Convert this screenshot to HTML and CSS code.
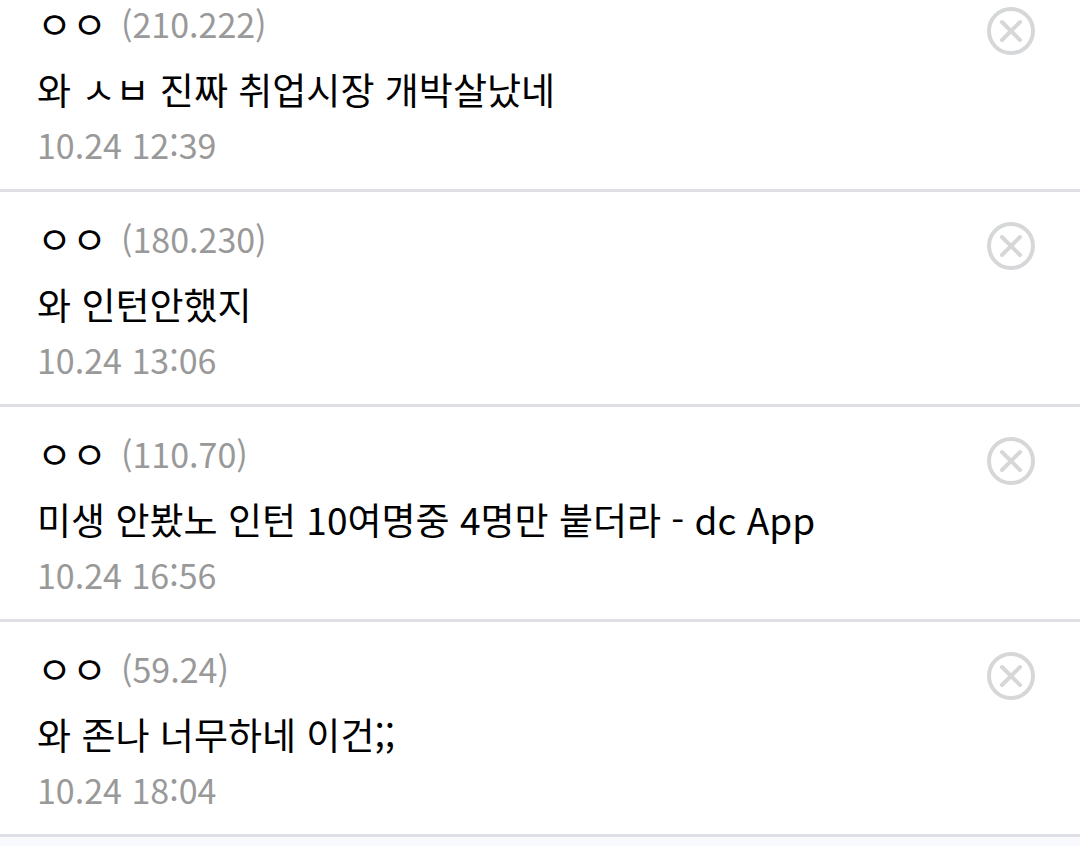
FILE: index.html
```html
<!DOCTYPE html>
<html lang="ko">
	<head>
		<meta charset="utf-8">
		<meta name="viewport" content="width=device-width">
		<title>댓글</title>
		<link rel="stylesheet" href="styles.css">
	</head>
	<body>
		<ul class="comments">
			<li class="comment">
				<div class="body">
					<p class="writer"><span class="nick">ㅇㅇ</span><span class="ip">(210.222)</span></p>
					<p class="text">와 ㅅㅂ 진짜 취업시장 개박살났네</p>
					<time class="date">10.24 12:39</time>
				</div>
				<button class="delete" type="button" aria-label="삭제">
					<svg viewBox="0 0 48 48"><circle cx="24" cy="24" r="22"/><path d="M15 15L33 33M33 15L15 33"/></svg>
				</button>
			</li>
			<li class="comment">
				<div class="body">
					<p class="writer"><span class="nick">ㅇㅇ</span><span class="ip">(180.230)</span></p>
					<p class="text">와 인턴안했지</p>
					<time class="date">10.24 13:06</time>
				</div>
				<button class="delete" type="button" aria-label="삭제">
					<svg viewBox="0 0 48 48"><circle cx="24" cy="24" r="22"/><path d="M15 15L33 33M33 15L15 33"/></svg>
				</button>
			</li>
			<li class="comment">
				<div class="body">
					<p class="writer"><span class="nick">ㅇㅇ</span><span class="ip">(110.70)</span></p>
					<p class="text">미생 안봤노 인턴 10여명중 4명만 붙더라 - dc App</p>
					<time class="date">10.24 16:56</time>
				</div>
				<button class="delete" type="button" aria-label="삭제">
					<svg viewBox="0 0 48 48"><circle cx="24" cy="24" r="22"/><path d="M15 15L33 33M33 15L15 33"/></svg>
				</button>
			</li>
			<li class="comment">
				<div class="body">
					<p class="writer"><span class="nick">ㅇㅇ</span><span class="ip">(59.24)</span></p>
					<p class="text">와 존나 너무하네 이건;;</p>
					<time class="date">10.24 18:04</time>
				</div>
				<button class="delete" type="button" aria-label="삭제">
					<svg viewBox="0 0 48 48"><circle cx="24" cy="24" r="22"/><path d="M15 15L33 33M33 15L15 33"/></svg>
				</button>
			</li>
		</ul>
	</body>
</html>
```

FILE: styles.css
```css
body {
	margin: 0;
	min-height: 100vh;
	background: #f8f9fc;
	font-family: "Noto Sans CJK KR", sans-serif;
	color: #000;
}

.comments {
	margin: 0;
	padding: 0;
	list-style: none;
}

.comment {
	display: flex;
	justify-content: space-between;
	align-items: flex-start;
	padding: 23px 45px 20px 37px;
	border-bottom: 3px solid #dfe0e5;
	background: #fff;
}
.comment:first-child {
	padding-top: 0;
}

.writer,
.text {
	margin: 0;
}
.writer {
	display: flex;
	align-items: flex-start;
	gap: 14px;
	line-height: 48px;
}
.nick {
	font-size: 38px;
	line-height: 46px;
}
.ip,
.date {
	color: #999;
	font-size: 34px;
}
.text {
	padding: 17px 0 8px;
	font-size: 37px;
	line-height: 48px;
}
.date {
	display: block;
	line-height: 48px;
}

.delete {
	flex: none;
	margin: 7px 0 0;
	padding: 0;
	border: 0;
	background: none;
}
.delete svg {
	display: block;
	width: 48px;
	height: 48px;
	fill: none;
	stroke: #d6d7d9;
	stroke-width: 4;
	stroke-linecap: round;
}
```
